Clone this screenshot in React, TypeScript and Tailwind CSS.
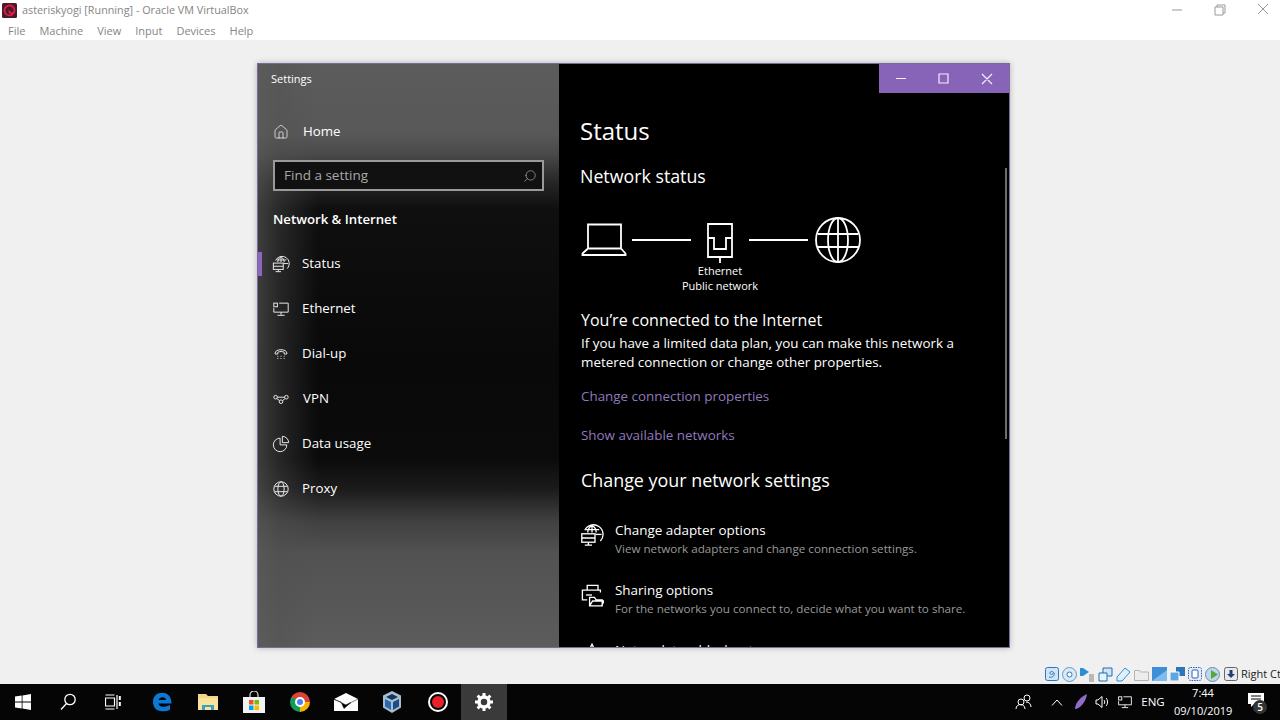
import type { ReactNode } from "react";
import { Home, Search } from "lucide-react";

const FONT = "font-['Open_Sans','Noto_Sans',sans-serif]";

function Ico({ size = 20, children, className = "" }: { size?: number; children: ReactNode; className?: string }) {
  return (
    <svg width={size} height={size} viewBox="0 0 20 20" fill="none" stroke="currentColor" strokeWidth="1.1" className={`shrink-0 ${className}`}>
      {children}
    </svg>
  );
}

const StatusIcon = () => (
  <>
    <path d="M4 6a8 8 0 1 1 13 9" />
    <path d="M5 5.500h11M10 2v6M6.500 8c0-2.500 1-4.500 3.500-6 2.500 1.500 3.500 3.500 3.500 6" />
    <path d="M13 9.500h5" />
    <rect x="1.500" y="9" width="11" height="7" />
    <path d="M1.500 12.500h11M7 16v2M4 18.500h6" />
  </>
);

const EthernetIcon = () => (
  <>
    <path d="M8 3.500h10v10H2V9" />
    <rect x="2" y="3.500" width="4" height="4" />
    <path d="M10 13.500v3M6 17h8" />
  </>
);

const DialIcon = () => (
  <>
    <path d="M3.500 9c0-5 13-5 13 0v1h-3V8c-2-1-5-1-7 0v2h-3z" />
    <path d="M6 12.500h1M9.500 12.500h1M13 12.500h1M6 15h1M9.500 15h1M13 15h1" />
  </>
);

const VpnIcon = () => (
  <>
    <circle cx="4" cy="8" r="2" />
    <circle cx="16" cy="8" r="2" />
    <circle cx="10" cy="13" r="2" />
    <path d="M6 8h8M5.500 9.500l3 2.500M14.500 9.500l-3 2.500" />
  </>
);

const DataIcon = () => (
  <>
    <path d="M9 3.500a7.500 7.500 0 1 0 7.500 7.500H9z" />
    <path d="M11.500 1.500a7 7 0 0 1 7 7h-7z" />
  </>
);

const GlobeIcon = () => (
  <>
    <circle cx="10" cy="10" r="8" />
    <ellipse cx="10" cy="10" rx="3.500" ry="8" />
    <path d="M2.800 7h14.400M2.800 13h14.400" />
  </>
);

const navItems: { label: string; icon: ReactNode; active?: boolean; ml: string }[] = [
  { label: "Status", icon: <StatusIcon />, active: true, ml: "ml-[12px]" },
  { label: "Ethernet", icon: <EthernetIcon />, ml: "ml-[12px]" },
  { label: "Dial-up", icon: <DialIcon />, ml: "ml-[12px]" },
  { label: "VPN", icon: <VpnIcon />, ml: "ml-[13px]" },
  { label: "Data usage", icon: <DataIcon />, ml: "ml-[12px]" },
  { label: "Proxy", icon: <GlobeIcon />, ml: "ml-[12px]" },
];

function Sidebar() {
  return (
    <aside className="flex h-full w-[301px] shrink-0 flex-col text-white bg-[linear-gradient(90deg,rgba(90,90,90,0.62)_0px,rgba(80,80,80,0.38)_22px,rgba(70,70,70,0)_60px),linear-gradient(180deg,#5c5c5c_0px,#585858_70px,#4a4a4a_90px,#262626_118px,#0f0f0f_145px,#090909_300px,#0b0b0b_395px,#1b1b1b_425px,#414141_458px,#525252_490px,#5c5c5c_100%)]">
      <div className="ml-[13px] mt-[6px] text-[11px] leading-[18px]">Settings</div>
      <div className="ml-[15px] mt-[32px] flex h-[24px] items-center">
        <Home size={16} strokeWidth={1.2} className="text-[#eee]" />
        <span className="ml-[14px] text-[13.300px]">Home</span>
      </div>
      <div className="ml-[15px] mt-[16px] flex h-[31px] w-[271px] items-center justify-between border-2 border-[#9a9a9a] bg-[#111] pl-[9px] pr-[5px]">
        <span className="text-[13.500px] text-[#a8a8a8]">Find a setting</span>
        <Search size={14} strokeWidth={1.2} className="-scale-x-100 text-[#aaa]" />
      </div>
      <div className="ml-[15px] mt-[18px] text-[13.200px] font-semibold leading-[20px]">Network &amp; Internet</div>
      <nav className="mt-[23px] flex flex-col gap-[21px]">
        {navItems.map((it) => (
          <div key={it.label} className="relative flex h-[24px] items-center pl-[14px]">
            {it.active && <div className="absolute left-0 top-0 h-[24px] w-[4px] bg-[#8a68c0]" />}
            <Ico size={18} className="text-[#e8e8e8]">{it.icon}</Ico>
            <span className={`${it.ml} text-[13.300px]`}>{it.label}</span>
          </div>
        ))}
      </nav>
    </aside>
  );
}

function Diagram() {
  return (
    <div className="ml-[22px] mt-[28px] flex h-[78px] items-start text-white">
      <svg width="46" height="33" viewBox="0 0 46 33" fill="none" stroke="currentColor" strokeWidth="1.800" className="mt-[6px] shrink-0">
        <path d="M7 1.500h33v24H7zM7 25.500l-5.500 5v1.500h43v-1.500l-4.500-5" />
      </svg>
      <div className="ml-[5px] mt-[22px] h-[2px] w-[59px] bg-white" />
      <div className="flex w-[58px] flex-col items-center">
        <svg width="26" height="40" viewBox="0 0 26 40" fill="none" stroke="currentColor" strokeWidth="1.800" className="mt-[6px] shrink-0">
          <path d="M1 1h24v33H1zM13 34v6M1 15h6v11h12V15h6" />
        </svg>
        <div className="whitespace-nowrap text-center text-[11px] leading-[15px]">Ethernet<br />Public network</div>
      </div>
      <div className="mt-[22px] h-[2px] w-[59px] bg-white" />
      <svg width="46" height="46" viewBox="0 0 46 46" fill="none" stroke="currentColor" strokeWidth="1.800" className="ml-[7px] shrink-0">
        <circle cx="23" cy="23" r="22" />
        <ellipse cx="23" cy="23" rx="10" ry="22" />
        <path d="M23 1v44M3 17h40M3 30h40" />
      </svg>
    </div>
  );
}

function SettingRow({ icon, title, sub }: { icon: ReactNode; title: string; sub: string }) {
  return (
    <div className="ml-[21px] flex h-[60px] items-start">
      <Ico size={24} className="mt-[3px] text-white">{icon}</Ico>
      <div className="ml-[11px]">
        <div className="text-[13.450px] leading-[21px] text-white">{title}</div>
        <div className="text-[11.650px] leading-[16px] text-[#9a9a9a]">{sub}</div>
      </div>
    </div>
  );
}

const SharingIcon = () => (
  <>
    <path d="M6 6V2h9v4M6 14H2V6h15v2" />
    <path d="M5 10h5" />
    <path d="M8 19v-7h4l1.500 2h5v5zM8 19l2.500-4H20l-2 4" />
  </>
);

function Content() {
  return (
    <section className="relative h-full min-w-0 flex-1 overflow-hidden bg-black text-white">
      <div className="flex justify-end">
        <div className="flex h-[29px] w-[130px] items-center bg-[#8764b8] text-[#f3effa]">
          <svg width="130" height="29" viewBox="0 0 130 29" fill="none" stroke="currentColor" strokeWidth="1.200">
            <path d="M17 14.500h10M60 10h9v9h-9zM103 10l10 10M113 10l-10 10" />
          </svg>
        </div>
      </div>
      <h1 className="ml-[21px] mt-[20px] text-[24px] font-normal leading-[36px]">Status</h1>
      <h2 className="ml-[21px] mt-[14px] text-[17.800px] font-normal leading-[26px]">Network status</h2>
      <Diagram />
      <div className="ml-[22px] mt-[13px] text-[16px] leading-[24px]">You’re connected to the Internet</div>
      <p className="ml-[22px] mt-[2px] w-[400px] text-[13.400px] leading-[19px]">
        If you have a limited data plan, you can make this network a metered connection or change other properties.
      </p>
      <div className="ml-[22px] mt-[14px] text-[13.400px] leading-[20px] text-[#9278bd]">Change connection properties</div>
      <div className="ml-[22px] mt-[19px] text-[13.400px] leading-[20px] text-[#9278bd]">Show available networks</div>
      <h2 className="ml-[22px] mt-[21px] text-[17.900px] font-normal leading-[28px]">Change your network settings</h2>
      <div className="mt-[26px]">
        <SettingRow icon={<StatusIcon />} title="Change adapter options" sub="View network adapters and change connection settings." />
        <SettingRow icon={<SharingIcon />} title="Sharing options" sub="For the networks you connect to, decide what you want to share." />
        <div className="ml-[21px] flex items-start">
          <Ico size={24} className="mt-[3px]"><path d="M10 1L2 18h16z" /></Ico>
          <div className="ml-[11px] text-[13.450px] leading-[21px]">Network troubleshooter</div>
        </div>
      </div>
      <div className="absolute right-[2px] top-[104px] h-[271px] w-[2px] bg-[#6e6e6e]" />
    </section>
  );
}

function Window() {
  return (
    <div className="ml-[257px] mt-[23px] flex h-[585px] w-[753px] overflow-hidden border border-[#7b6a9c] shadow-[0_0_6px_rgba(0,0,0,0.25)]">
      <Sidebar />
      <Content />
    </div>
  );
}

const TaskIcon = ({ children, active, w = "w-[46px]" }: { children: ReactNode; active?: boolean; w?: string }) => (
  <div className={`flex h-[36px] ${w} shrink-0 items-center justify-center ${active ? "bg-[#3a3a3a]" : ""}`}>{children}</div>
);

function Taskbar() {
  return (
    <footer className="flex h-[36px] items-center bg-[#050505] text-white">
      <TaskIcon>
        <svg width="16" height="16" viewBox="0 0 16 16" fill="white"><path d="M0 2.400l6.700-.9v6.100H0zM7.500 1.400L16 0v7.600H7.500zM0 8.400h6.700v6.100L0 13.600zM7.500 8.400H16V16l-8.500-1.400z" /></svg>
      </TaskIcon>
      <TaskIcon w="w-[44px]">
        <svg width="16" height="18" viewBox="0 0 16 18" fill="none" stroke="white" strokeWidth="1.300"><circle cx="10" cy="6.500" r="5.200" /><path d="M6.500 10.500L1 16.500" /></svg>
      </TaskIcon>
      <TaskIcon w="w-[49px]">
        <svg width="16" height="16" viewBox="0 0 16 16" fill="none" stroke="white" strokeWidth="1.200" className="mr-[3px]"><path d="M.5 4h9v8h-9zM.5 1h9M.5 15h9M12 1v14" /><path d="M14.800 2v4M14.800 8v4" strokeWidth="2" /></svg>
      </TaskIcon>
      <TaskIcon>
        <svg width="20" height="20" viewBox="0 0 20 20"><path d="M1 10C1 4 5 .8 10.500.8 16 .8 19.500 5 19.500 11.500H6.500c.4 3.500 5.500 4.500 11.500 1.500v4.800c-7 3.300-17 1.700-17-7.800zM6.500 8h7.500c0-3.800-6.500-3.800-7.500 0z" fill="#0b78d6" /></svg>
      </TaskIcon>
      <TaskIcon>
        <svg width="20" height="18" viewBox="0 0 20 18"><path d="M0 1h8l2 2h10v14H0z" fill="#f3d684" /><path d="M0 5h20v12H0z" fill="#f9e29c" /><path d="M4 12h12v5H4z" fill="#3aa0c8" /><path d="M7 14h6v3H7z" fill="#f9e29c" /></svg>
      </TaskIcon>
      <TaskIcon>
        <svg width="22" height="22" viewBox="0 0 22 22"><path d="M7 6V4a4 4 0 0 1 8 0v2" fill="none" stroke="#ddd" strokeWidth="1.200" /><path d="M0 6h22v16H0z" fill="#f2f2f2" /><path d="M6 9h4.500v4.500H6z" fill="#f25022" /><path d="M11.500 9H16v4.500h-4.500z" fill="#7fba00" /><path d="M6 14.500h4.500V19H6z" fill="#00a4ef" /><path d="M11.500 14.500H16V19h-4.500z" fill="#ffb900" /></svg>
      </TaskIcon>
      <TaskIcon>
        <div className="flex h-[20px] w-[20px] items-center justify-center rounded-full bg-[conic-gradient(from_-30deg,#db4437_0deg_120deg,#f4b400_120deg_210deg,#0f9d58_210deg_330deg,#db4437_330deg_360deg)]">
          <div className="h-[10px] w-[10px] rounded-full border-2 border-white bg-[#4285f4]" />
        </div>
      </TaskIcon>
      <TaskIcon>
        <svg width="24" height="18" viewBox="0 0 24 18"><path d="M0 6L12 0l12 6v12H0z" fill="white" /><path d="M0 6l12 6 5-2.500-7 6L7 9 0 6.500zM12 12l12-6" fill="#050505" stroke="#050505" strokeWidth=".5" /></svg>
      </TaskIcon>
      <TaskIcon>
        <svg width="20" height="22" viewBox="0 0 20 22"><path d="M10 0l9 4.500v12L10 22l-9-5.500v-12z" fill="#a9bdd0" /><path d="M10 3l6 3-6 3-6-3z" fill="#14355f" /><path d="M3 8l6 3v8l-6-3.500z" fill="#2a6bb0" /><path d="M17 8l-6 3v8l6-3.500z" fill="#1d4b85" /></svg>
      </TaskIcon>
      <TaskIcon>
        <div className="flex h-[20px] w-[20px] items-center justify-center rounded-full border-2 border-white">
          <div className="h-[12px] w-[12px] rounded-full bg-[#e8202a]" />
        </div>
      </TaskIcon>
      <TaskIcon active>
        <svg width="20" height="20" viewBox="0 0 20 20" fill="none"><circle cx="10" cy="10" r="5" stroke="white" strokeWidth="3.500" /><path d="M10 1v3M10 16v3M1 10h3M16 10h3M3.600 3.600l2.100 2.100M14.300 14.300l2.100 2.100M3.600 16.400l2.100-2.100M14.300 5.700l2.100-2.100" stroke="white" strokeWidth="3" /></svg>
      </TaskIcon>
      <div className="ml-auto flex h-full items-center pr-[8px]">
        <svg width="18" height="16" viewBox="0 0 18 16" fill="none" stroke="white" strokeWidth="1" className="mr-[18px]"><circle cx="6" cy="8" r="3" /><circle cx="12" cy="4" r="3" /><path d="M1 15c0-6 9-6 9 0M11 8c3 0 5 2 5 5" /></svg>
        <svg width="12" height="7" viewBox="0 0 12 7" fill="none" stroke="white" strokeWidth="1" className="mr-[11px]"><path d="M1 6.500L6 1l5 5.500" /></svg>
        <svg width="14" height="16" viewBox="0 0 14 16" className="mr-[7px]"><path d="M13 0C8 2 1 8 1 15c5 0 11-7 12-15z" fill="#8e6bc4" /></svg>
        <svg width="15" height="14" viewBox="0 0 15 14" fill="none" stroke="white" strokeWidth="1" className="mr-[7px]"><path d="M1 5h2l4-3.500v11L3 9H1zM9 5c1 1 1 3 0 4M11 3c2 2 2 6 0 8" /></svg>
        <Ico size={16} className="text-white"><EthernetIcon /></Ico>
        <span className="w-[40px] text-center text-[11.500px]">ENG</span>
        <div className="ml-[1px] w-[58px] text-center text-[11px] leading-[18px]">7:44<br />09/10/2019</div>
        <div className="relative ml-[16px] h-[20px] w-[24px]">
          <svg width="16" height="16" viewBox="0 0 16 16" fill="white"><path d="M0 1h16v11H6l-3 3v-3H0z" /><path d="M3 4h10M3 7h10" stroke="#050505" /></svg>
          <div className="absolute bottom-[-2px] right-[5px] flex h-[14px] w-[14px] items-center justify-center rounded-full bg-[#333] text-[10px] font-semibold">5</div>
        </div>
      </div>
    </footer>
  );
}

const vmIcons: ReactNode[] = [
  <svg key="a" width="14" height="14" viewBox="0 0 14 14"><rect x=".5" y=".5" width="13" height="13" rx="2" fill="#cfe4f7" stroke="#2b77b8" /><path d="M4 10c4 1 6-2 5-4S5 4 5 6s3 2 3 0" fill="none" stroke="#2b77b8" /></svg>,
  <svg key="b" width="15" height="15" viewBox="0 0 15 15"><circle cx="7.500" cy="7.500" r="7" fill="#dbe9f5" stroke="#5c9bd0" /><circle cx="7.500" cy="7.500" r="2.500" fill="#fff" stroke="#2b77b8" /></svg>,
  <svg key="c" width="15" height="15" viewBox="0 0 15 15"><path d="M0 1h3l6 4-6 4H0z" fill="#2b8fd6" /><path d="M9 7h5v8H9z" fill="#b8b8b8" /></svg>,
  <svg key="d" width="15" height="15" viewBox="0 0 15 15"><path d="M5 1h9v8H5z" fill="#cfe4f7" stroke="#1f6fb3" /><path d="M1 6h8v8H1z" fill="#eaf3fb" stroke="#1f6fb3" /></svg>,
  <svg key="e" width="15" height="15" viewBox="0 0 15 15"><path d="M9 1l5 4-8 9H1v-4z" fill="#dff0fb" stroke="#2b8fd6" /></svg>,
  <svg key="f" width="15" height="13" viewBox="0 0 15 13"><path d="M.5 2.500h5l1 1.500h8v8.500H.5z" fill="#ececec" stroke="#b5b5b5" /></svg>,
  <svg key="g" width="15" height="14" viewBox="0 0 15 14"><rect width="15" height="14" fill="#3f8fd8" /><path d="M0 14L15 3v11z" fill="#7dbcec" /></svg>,
  <svg key="h" width="15" height="14" viewBox="0 0 15 14"><path d="M6 0h9v9H6z" fill="#2b77b8" /><path d="M0 5h9v9H0z" fill="#5ea6e0" stroke="#fff" /></svg>,
  <svg key="i" width="14" height="14" viewBox="0 0 14 14"><rect x=".5" y=".5" width="13" height="13" rx="2" fill="#e4eefa" stroke="#2b5fb0" strokeDasharray="1.500 1" /><rect x="4" y="3" width="6" height="8" rx="1" fill="#fff" stroke="#2b5fb0" /></svg>,
  <svg key="j" width="16" height="15" viewBox="0 0 16 15"><circle cx="7.500" cy="7.500" r="7" fill="#bcd7ee" stroke="#6a8ca8" /><path d="M6 3l7 4.500L6 12z" fill="#57a83c" /></svg>,
  <svg key="k" width="14" height="14" viewBox="0 0 14 14"><rect x=".5" y=".5" width="13" height="13" rx="2" fill="#e8e8ee" stroke="#666" /><path d="M5.500 3h3v4H11l-4 4-4-4h2.500z" fill="#1c3f70" /></svg>,
];

export default function App() {
  return (
    <div className={`flex h-[720px] w-[1280px] flex-col overflow-hidden bg-[#f0f0f0] ${FONT}`}>
      <header className="h-[40px] shrink-0 bg-white text-[#858585]">
        <div className="flex h-[20px] items-center pl-[2px]">
          <svg width="15" height="15" viewBox="0 0 15 15" fill="none" className="shrink-0">
            <rect width="15" height="15" rx="1.500" fill="#4a1a2a" />
            <path d="M11 11a5 5 0 1 1 1.500-3.500c0 2-1.500 3-3 3S7 9 7.500 7.500" stroke="#e01c48" strokeWidth="1.800" />
          </svg>
          <span className="ml-[5px] text-[10.800px]">asteriskyogi [Running] - Oracle VM VirtualBox</span>
          <svg width="100" height="14" viewBox="0 0 100 14" fill="none" stroke="#999" className="ml-auto mr-[12px]">
            <path d="M4 7h10M47 4h8v8h-8zM49 4V2h8v8h-2M90 1l10 10M100 1L90 11" />
          </svg>
        </div>
        <nav className="flex h-[20px] items-center gap-[14px] pl-[8px] pt-[2px] text-[11px]">
          <span>File</span>
          <span>Machine</span>
          <span>View</span>
          <span>Input</span>
          <span>Devices</span>
          <span>Help</span>
        </nav>
      </header>
      <main className="flex min-h-0 flex-1 flex-col">
        <Window />
        <div className="mt-auto flex h-[20px] items-center justify-end gap-[3px] text-[11px] text-[#222]">
          {vmIcons}
          <span className="w-[39px] overflow-hidden whitespace-nowrap">Right Ctrl</span>
        </div>
      </main>
      <Taskbar />
    </div>
  );
}
